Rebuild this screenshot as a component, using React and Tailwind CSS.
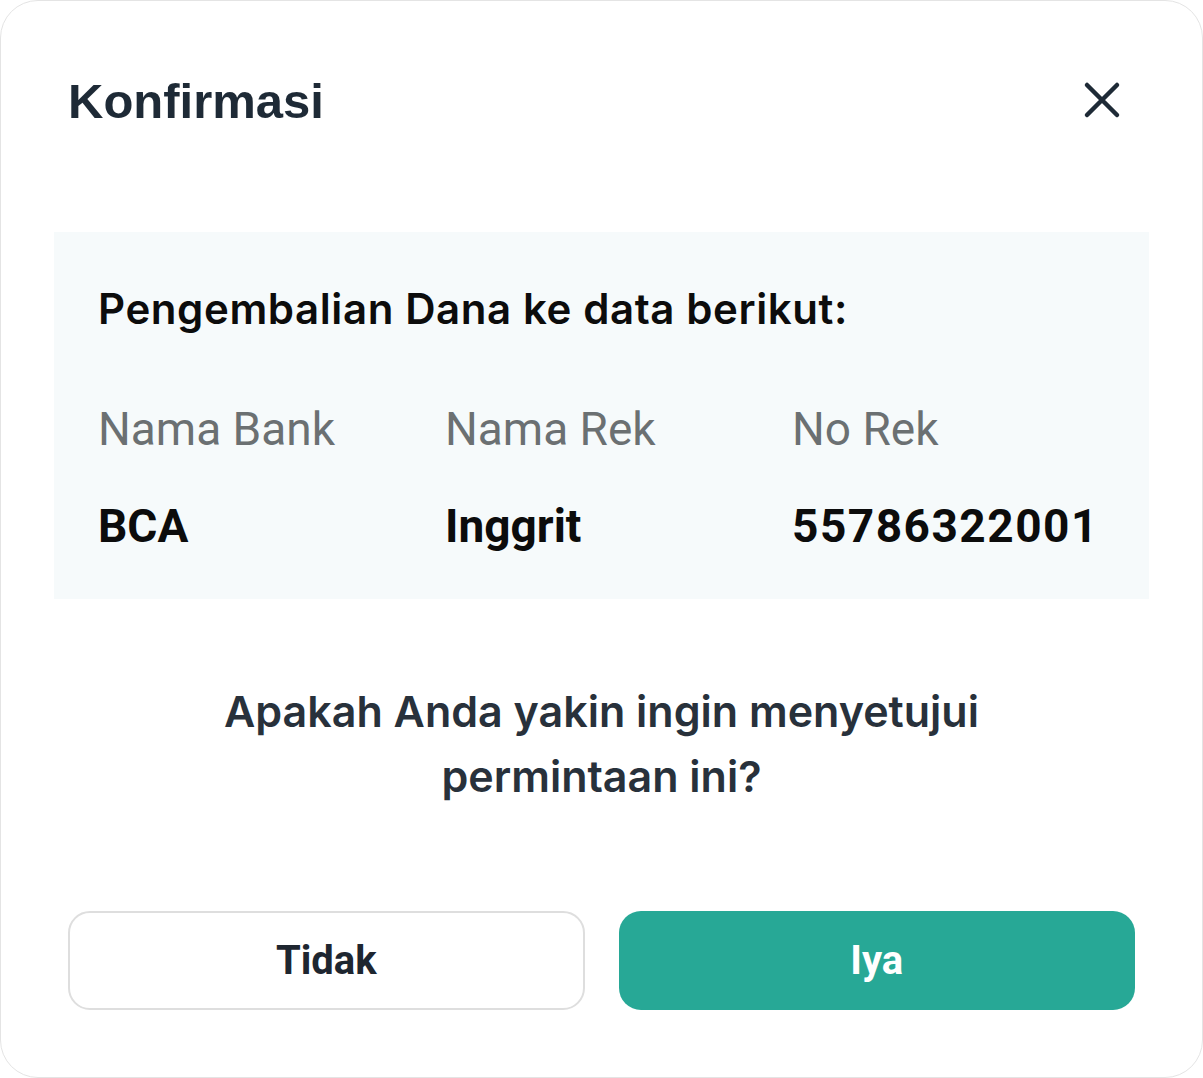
const rows = [
  { label: 'Nama Bank', value: 'BCA' },
  { label: 'Nama Rek', value: 'Inggrit' },
  { label: 'No Rek', value: '55786322001', wide: true },
];

export default function App() {
  return (
    <div className="w-[1203px] h-[1078px] bg-white">
      <div className="w-full h-full flex flex-col rounded-[38px] border border-[#e4e4e4] bg-white">
        {/* Header */}
        <div className="flex items-center justify-between pl-[67px] pr-[80px] pt-[76px]">
          <h1 className="text-[49px] leading-none font-bold text-[#1e2a36] font-['Liberation_Sans',Arial,sans-serif]">
            Konfirmasi
          </h1>
          <button className="-mt-[4px] text-[#1e2a36]">
            <svg width="40" height="40" viewBox="0 0 40 40" fill="none" stroke="currentColor" strokeWidth="4.5" strokeLinecap="round">
              <path d="M5 5L35 35M35 5L5 35" />
            </svg>
          </button>
        </div>

        {/* Data panel */}
        <div className="mx-[53px] mt-[106px] bg-[#f6fafb] pl-[44px] pt-[56px] pb-[50px] font-['Inter',sans-serif]">
          <p className="text-[42px] leading-none font-semibold tracking-[0.6px] text-[#0c0c0c]">
            Pengembalian Dana ke data berikut:
          </p>
          <div className="mt-[76px] grid grid-cols-[347px_347px_1fr] font-['Roboto',sans-serif]">
            {rows.map((r) => (
              <div key={r.label} className="flex flex-col">
                <span className="text-[46px] leading-none text-[#6b7072]">{r.label}</span>
                <span
                  className={
                    r.wide
                      ? 'mt-[51px] text-[46px] leading-none font-bold tracking-[1.5px] text-[#0c0c0c]'
                      : 'mt-[51px] text-[46px] leading-none font-bold text-[#0c0c0c]'
                  }
                >
                  {r.value}
                </span>
              </div>
            ))}
          </div>
        </div>

        {/* Question */}
        <p className="mt-[80px] text-center text-[43px] leading-[65px] font-semibold text-[#28313b] font-['Inter',sans-serif]">
          Apakah Anda yakin ingin menyetujui
          <br />
          permintaan ini?
        </p>

        {/* Actions */}
        <div className="mt-auto mb-[67px] mx-[67px] grid grid-cols-2 gap-[34px] font-['Roboto',sans-serif]">
          <button className="h-[99px] rounded-[22px] border-2 border-[#dedede] bg-white text-[40px] font-bold text-[#1e2630]">
            Tidak
          </button>
          <button className="h-[99px] rounded-[22px] bg-[#27a896] text-[40px] font-bold text-white">
            Iya
          </button>
        </div>
      </div>
    </div>
  );
}
